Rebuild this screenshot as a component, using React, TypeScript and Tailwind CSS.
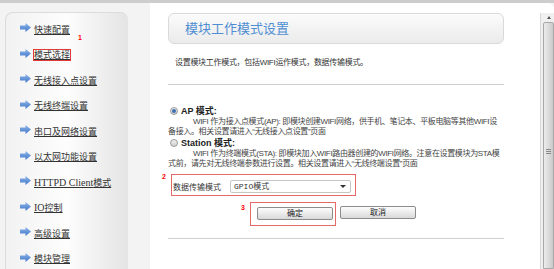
import { ReactNode } from "react";

const cjk = "font-['Liberation_Sans','Noto_Sans_CJK_SC',sans-serif]";

function Arrow() {
  return (
    <svg width="11" height="9" viewBox="0 0 11 9" className="shrink-0">
      <defs>
        <linearGradient id="ag" x1="0" y1="0" x2="0" y2="1">
          <stop offset="0" stopColor="#8fb6ea" />
          <stop offset="1" stopColor="#3f76c8" />
        </linearGradient>
      </defs>
      <path d="M0 2.5 H5.5 V0 L11 4.5 L5.5 9 V6.5 H0 Z" fill="url(#ag)" />
    </svg>
  );
}

const menu: { label: ReactNode; key: string }[] = [
  { key: "quick", label: "快速配置" },
  { key: "mode", label: "模式选择" },
  { key: "ap", label: "无线接入点设置" },
  { key: "sta", label: "无线终端设置" },
  { key: "uart", label: "串口及网络设置" },
  { key: "eth", label: "以太网功能设置" },
  {
    key: "httpd",
    label: (
      <>
        <span className="font-['Liberation_Serif',serif] text-[10px]">HTTPD Client</span>模式
      </>
    ),
  },
  {
    key: "io",
    label: (
      <>
        <span className="font-['Liberation_Serif',serif] text-[10px]">IO</span>控制
      </>
    ),
  },
  { key: "adv", label: "高级设置" },
  { key: "mgr", label: "模块管理" },
];

function Radio({ checked }: { checked?: boolean }) {
  return (
    <span className="w-[8px] h-[8px] rounded-full border border-[#9a9a9a] bg-gradient-to-b from-[#f0f0f0] to-[#d0d0d0] flex items-center justify-center shrink-0">
      {checked && <span className="w-[4px] h-[4px] rounded-full bg-[#3b6fb6]" />}
    </span>
  );
}

export default function App() {
  return (
    <div className={`w-[554px] h-[269px] overflow-hidden bg-[#f3f3f3] ${cjk} text-[#333]`}>
      <div className="h-[3px] bg-[#cdcdcd]" />
      <div className="flex">
        {/* Left menu */}
        <aside className="shrink-0 ml-[5px] mt-[9px] w-[123px] h-[270px] rounded-t-[8px] border-l border-t border-[#dcdcdc] bg-gradient-to-r from-[#f2f2f2] via-[#fdfdfd] to-[#e4e4e4] pl-[14px] pt-[2px] flex flex-col">
          {menu.map((m) => (
            <div key={m.key} className="h-[25.5px] flex items-center gap-[3px] shrink-0">
              <Arrow />
              <span className="relative">
                <span
                  className={`text-[9px] leading-[10px] underline underline-offset-1 whitespace-nowrap ${
                    m.key === "mode" ? "outline outline-1 outline-[#e23a3a]" : ""
                  }`}
                >
                  {m.label}
                </span>
                {m.key === "mode" && (
                  <span className="absolute left-[44px] -top-[8px] text-[7px] font-bold text-[#ff0000] font-['Liberation_Sans',sans-serif]">
                    1
                  </span>
                )}
              </span>
            </div>
          ))}
        </aside>

        {/* Right panel */}
        <main className="ml-[22px] flex-1 min-w-0 h-[266px] bg-white rounded-tr-[6px] flex">
          <div className="flex-1 min-w-0 pl-[18px] pr-[36px] pt-[10px]">
            <div className="h-[31px] rounded-[6px] border border-[#dadada] bg-gradient-to-b from-[#fbfbfb] to-[#ebebeb] flex items-center pl-[16px]">
              <span className="text-[13px] text-[#4f8ed3]">模块工作模式设置</span>
            </div>
            <p className="mt-[14px] pl-[7px] text-[8px] leading-[10px] tracking-[-0.3px] whitespace-nowrap">
              设置模块工作模式，包括WIFI运作模式，数据传输模式。
            </p>
            <div className="mt-[16px] border-t border-[#cfcfcf]" />

            <div className="mt-[20px] text-[8px] leading-[10px] whitespace-nowrap">
              <div className="h-[12px] flex items-center gap-[3px] pl-[2px] text-[9px]">
                <Radio checked />
                <span className="font-bold text-[#222]">AP 模式:</span>
              </div>
              <div className="pl-[25px] text-[#444] tracking-[-0.35px]">
                WIFI 作为接入点模式(AP): 即模块创建WIFI网络，供手机、笔记本、平板电脑等其他WIFI设
              </div>
              <div className="text-[#444] tracking-[-0.35px]">备接入。相关设置请进入“无线接入点设置”页面</div>
              <div className="h-[12px] flex items-center gap-[3px] pl-[2px] text-[9px]">
                <Radio />
                <span className="font-bold text-[#222]">Station 模式:</span>
              </div>
              <div className="pl-[25px] text-[#444] tracking-[-0.35px]">
                WIFI 作为终端模式(STA): 即模块加入WIFI路由器创建的WIFI网络。注意在设置模块为STA模
              </div>
              <div className="text-[#444] tracking-[-0.35px]">式前，请先对无线终端参数进行设置。相关设置请进入“无线终端设置”页面</div>
            </div>

            {/* Data transfer mode */}
            <div className="relative mt-[5px] ml-[3px] w-[185px] h-[22px] border border-[#e46a6a] flex items-end pb-[1px] pl-[1px] gap-[9px]">
              <span className="absolute -left-[10px] -top-[3px] text-[7px] font-bold text-[#ff0000]">2</span>
              <span className="text-[8px] leading-[10px] mb-[1px] whitespace-nowrap">数据传输模式</span>
              <div className="w-[121px] h-[13px] border border-[#c6c6c6] rounded-[2px] bg-white flex items-center justify-between pl-[3px] pr-[4px] mb-[1px]">
                <span className="text-[8px] leading-[10px] font-['Liberation_Mono','Noto_Sans_CJK_SC',monospace]">GPIO模式</span>
                <span className="w-0 h-0 border-l-[3px] border-r-[3px] border-t-[3px] border-l-transparent border-r-transparent border-t-[#333]" />
              </div>
            </div>

            {/* Buttons */}
            <div className="mt-[6px] ml-[82px] flex items-start gap-[4px]">
              <div className="relative shrink-0 w-[86px] h-[24px] border border-[#e46a6a] pl-[6px] pt-[4px] flex items-start">
                <span className="absolute -left-[10px] top-[1px] text-[7px] leading-[8px] font-bold text-[#ff0000]">3</span>
                <button className="block w-[76px] h-[13px] rounded-[2px] border border-[#8c8c8c] bg-gradient-to-b from-[#fdfdfd] to-[#d9d9d9] text-[8px] leading-[10px] text-[#222]">
                  确定
                </button>
              </div>
              <button className="block shrink-0 mt-[4px] w-[76px] h-[13px] rounded-[2px] border border-[#8c8c8c] bg-gradient-to-b from-[#fdfdfd] to-[#d9d9d9] text-[8px] leading-[10px] text-[#222]">
                取消
              </button>
            </div>
            <div className="mt-[12px] border-t border-[#cfcfcf]" />
          </div>

          {/* Scrollbar */}
          <div className="shrink-0 mt-[10px] w-[14px] border-l border-[#d8d8d8] bg-[#f0f0f0] flex flex-col pl-[2px]">
            <div className="h-[9px] flex items-center justify-center">
              <span className="w-0 h-0 border-l-[2px] border-r-[2px] border-b-[3px] border-l-transparent border-r-transparent border-b-[#555]" />
            </div>
            <div className="flex-1 border border-[#a8a8a8] rounded-t-[2px] bg-gradient-to-r from-[#ececec] via-[#dcdcdc] to-[#c9c9c9] flex flex-col items-center pt-[126px]">
              <span className="w-[5px] h-[1px] bg-[#888] mb-[1px]" />
              <span className="w-[5px] h-[1px] bg-[#888] mb-[1px]" />
              <span className="w-[5px] h-[1px] bg-[#888]" />
            </div>
          </div>
        </main>
      </div>
    </div>
  );
}
